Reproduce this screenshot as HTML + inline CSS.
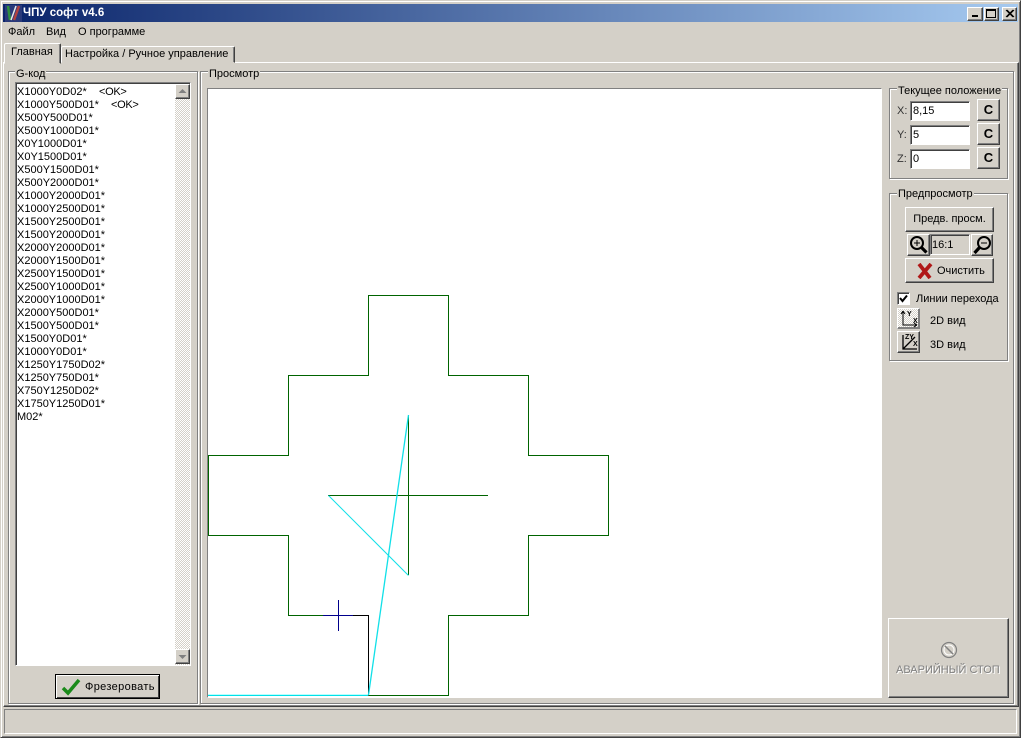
<!DOCTYPE html>
<html><head><meta charset="utf-8"><style>
*{box-sizing:border-box}
html,body{margin:0;padding:0}
body{width:1021px;height:738px;overflow:hidden;position:relative;background:#d4d0c8;font:11px/13px "Liberation Sans",sans-serif;color:#000}
.a{position:absolute}
.t{position:absolute;white-space:pre}
.raised{position:absolute;background:#d4d0c8;border:1px solid;border-color:#fff #404040 #404040 #fff;box-shadow:inset -1px -1px 0 #808080}
.sunk{position:absolute;background:#fff;border:1px solid;border-color:#808080 #fff #fff #808080;box-shadow:inset 1px 1px 0 #404040}
.grp{position:absolute;border:1px solid #808080;box-shadow:1px 1px 0 #fff,inset 1px 1px 0 #fff}
.lab{position:absolute;background:#d4d0c8;padding:0 1px;white-space:pre;line-height:13px}
.c{font-weight:bold;font-size:13px;text-align:center;line-height:19px}
</style></head><body>
<div class="a" style="left:0;top:0;width:1021px;height:738px;border:1px solid;border-color:#d4d0c8 #404040 #404040 #d4d0c8;box-shadow:inset 1px 1px 0 #fff,inset -1px -1px 0 #808080"></div>
<div class="a" style="left:3px;top:4px;width:1015px;height:18px;background:linear-gradient(90deg,#0a246a,#a6caf0)"></div>
<svg class="a" style="left:5px;top:5px" width="17" height="17" viewBox="0 0 17 17"><rect width="17" height="17" fill="#2a3a7a"/><path d="M3 1l2 14" stroke="#2f8f3f" stroke-width="2.500"/><path d="M9 15L14 1" stroke="#b04040" stroke-width="2.500"/><path d="M6 15L11 1" stroke="#e8e8e8" stroke-width="1.500"/></svg>
<div class="t" style="left:23px;top:7px;color:#fff;font-weight:bold;font-size:11.500px">ЧПУ софт v4.6</div>
<div class="raised" style="left:967px;top:7px;width:16px;height:14px"></div><div class="a" style="left:972px;top:15px;width:6px;height:2px;background:#000"></div>
<div class="raised" style="left:984px;top:7px;width:15px;height:14px"></div><div class="a" style="left:986px;top:9px;width:10px;height:9px;border:1px solid #000;border-top-width:2px"></div>
<div class="raised" style="left:1002px;top:7px;width:15px;height:14px"></div>
<svg class="a" style="left:1002px;top:7px" width="15" height="14"><path d="M4 3l7 7M5 3l7 7M11 3l-7 7M12 3l-7 7" stroke="#000"/></svg>
<div class="t" style="left:8px;top:26px">Файл</div><div class="t" style="left:46px;top:26px">Вид</div><div class="t" style="left:78px;top:26px">О программе</div>
<div class="a" style="left:3px;top:62px;width:1016px;height:645px;border:1px solid;border-color:#fff #404040 #404040 #fff;box-shadow:inset -1px -1px 0 #808080"></div>
<div class="a" style="left:61px;top:46px;width:174px;height:17px;background:#d4d0c8;border:1px solid;border-color:#fff #404040 #d4d0c8 #fff;border-radius:2px 2px 0 0;box-shadow:inset -1px 0 0 #808080"></div>
<div class="t" style="left:65px;top:48px">Настройка / Ручное управление</div>
<div class="a" style="left:4px;top:43px;width:57px;height:21px;background:#d4d0c8;border:1px solid;border-color:#fff #404040 #d4d0c8 #fff;border-radius:2px 2px 0 0;box-shadow:inset -1px 0 0 #808080"></div>
<div class="t" style="left:11px;top:46px">Главная</div>

<div class="grp" style="left:8px;top:71px;width:190px;height:633px"></div><div class="lab" style="left:15px;top:68px">G-код</div>
<div class="sunk" style="left:15px;top:82px;width:176px;height:584px"></div>
<div class="a" style="left:175px;top:84px;width:15px;height:581px;background:repeating-conic-gradient(#fff 0 25%,#d4d0c8 0 50%) 0 0/2px 2px"></div>
<div class="raised" style="left:175px;top:84px;width:15px;height:15px"></div><svg class="a" style="left:175px;top:84px" width="15" height="15"><path d="M7.500 5l-4 4h8z" fill="#808080"/></svg>
<div class="raised" style="left:175px;top:649px;width:15px;height:15px"></div><svg class="a" style="left:175px;top:649px" width="15" height="15"><path d="M7.500 10l-4-4h8z" fill="#808080"/></svg>
<div class="t" style="left:17px;top:86px">X1000Y0D02*
X1000Y500D01*
X500Y500D01*
X500Y1000D01*
X0Y1000D01*
X0Y1500D01*
X500Y1500D01*
X500Y2000D01*
X1000Y2000D01*
X1000Y2500D01*
X1500Y2500D01*
X1500Y2000D01*
X2000Y2000D01*
X2000Y1500D01*
X2500Y1500D01*
X2500Y1000D01*
X2000Y1000D01*
X2000Y500D01*
X1500Y500D01*
X1500Y0D01*
X1000Y0D01*
X1250Y1750D02*
X1250Y750D01*
X750Y1250D02*
X1750Y1250D01*
M02*</div>
<div class="t" style="left:99px;top:86px;letter-spacing:-.3px">&lt;OK&gt;</div>
<div class="t" style="left:111px;top:99px;letter-spacing:-.3px">&lt;OK&gt;</div>
<div class="a" style="left:55px;top:674px;width:105px;height:25px;border:1px solid #000;background:#d4d0c8;box-shadow:inset 1px 1px 0 #fff,inset -1px -1px 0 #404040"></div>
<svg class="a" style="left:61px;top:677px" width="20" height="19"><path d="M2 11l5 5L18 3" fill="none" stroke="#1a8a1a" stroke-width="3.500"/></svg>
<div class="t" style="left:85px;top:681px;letter-spacing:.35px">Фрезеровать</div>

<div class="grp" style="left:200px;top:71px;width:814px;height:633px"></div><div class="lab" style="left:208px;top:68px">Просмотр</div>
<div class="sunk" style="left:207px;top:88px;width:675px;height:610px;box-shadow:none"></div>
<svg class="a" style="left:0;top:0" width="1021" height="738" shape-rendering="crispEdges">
<path d="M208 694.500H368" fill="none" stroke="#b8ffff"/>
<g fill="none" stroke="#006400"><path d="M368.500 695.500H448.500V615.500H528.500V535.500H608.500V455.500H528.500V375.500H448.500V295.500H368.500V375.500H288.500V455.500H208.500V535.500H288.500V615.500H323"/>
<path d="M328 495.500H488M408.500 415V575"/></g>
<path d="M323 615.500H368.500V695.500" fill="none" stroke="#000"/>
<path d="M208 695.500H368" fill="none" stroke="#00e0e8"/>
<g shape-rendering="auto" fill="none" stroke="#10e0e8"><path d="M368.500 695L408.500 415" stroke-width="1.300"/><path d="M328.500 495.500L408.500 575.500"/></g>
<path d="M338.500 600V631M323 615.500H353" fill="none" stroke="#00008b"/>
</svg>

<div class="grp" style="left:889px;top:88px;width:119px;height:91px"></div><div class="lab" style="left:897px;top:85px">Текущее положение</div>
<div class="t" style="left:897px;top:105px;color:#333">X:</div><div class="t" style="left:897px;top:129px;color:#333">Y:</div><div class="t" style="left:897px;top:153px;color:#333">Z:</div>
<div class="sunk" style="left:910px;top:101px;width:60px;height:20px"></div><div class="t" style="left:913px;top:105px">8,15</div>
<div class="sunk" style="left:910px;top:125px;width:60px;height:20px"></div><div class="t" style="left:913px;top:129px">5</div>
<div class="sunk" style="left:910px;top:149px;width:60px;height:20px"></div><div class="t" style="left:913px;top:153px">0</div>
<div class="raised c" style="left:977px;top:99px;width:23px;height:22px">C</div>
<div class="raised c" style="left:977px;top:123px;width:23px;height:22px">C</div>
<div class="raised c" style="left:977px;top:147px;width:23px;height:22px">C</div>

<div class="grp" style="left:889px;top:193px;width:119px;height:168px"></div><div class="lab" style="left:897px;top:188px">Предпросмотр</div>
<div class="raised" style="left:905px;top:207px;width:89px;height:25px;text-align:center;line-height:22px">Предв. просм.</div>
<div class="raised" style="left:907px;top:234px;width:23px;height:22px"></div>
<svg class="a" style="left:907px;top:234px" width="23" height="22"><circle cx="10" cy="9" r="6" fill="none" stroke="#000" stroke-width="2"/><path d="M7 9h6M10 6v6" stroke="#000"/><path d="M14.500 13.500l5 5" stroke="#000" stroke-width="3.200"/></svg>
<div class="sunk" style="left:930px;top:234px;width:40px;height:21px;background:#d4d0c8"></div><div class="t" style="left:932px;top:239px">16:1</div>
<div class="raised" style="left:971px;top:234px;width:22px;height:22px"></div>
<svg class="a" style="left:971px;top:234px" width="22" height="22"><circle cx="13" cy="9" r="6" fill="none" stroke="#000" stroke-width="2"/><path d="M10 9h6" stroke="#000"/><path d="M8.500 13.500l-5 5.500" stroke="#000" stroke-width="3.200"/></svg>
<div class="raised" style="left:905px;top:258px;width:89px;height:25px"></div>
<svg class="a" style="left:917px;top:263px" width="16" height="16"><path d="M2 1l11 14M14 1L2 15" stroke="#b01818" stroke-width="3.800"/></svg>
<div class="t" style="left:937px;top:265px">Очистить</div>
<div class="sunk" style="left:897px;top:292px;width:13px;height:13px"></div>
<svg class="a" style="left:897px;top:292px" width="13" height="13"><path d="M3 6l2.500 3L10 3.500" fill="none" stroke="#000" stroke-width="2"/></svg>
<div class="t" style="left:916px;top:293px">Линии перехода</div>
<div class="raised" style="left:897px;top:308px;width:23px;height:21px;border-color:#fff #808080 #808080 #fff;background:repeating-conic-gradient(#fff 0 25%,#d4d0c8 0 50%) 0 0/2px 2px"></div>
<svg class="a" style="left:897px;top:308px" width="23" height="21"><path d="M6 3v14h14M6 3L4 6M6 3l2 3M20 17l-3-2M20 17l-3 2" fill="none" stroke="#000"/><text x="10" y="8" font-size="7" font-family="Liberation Sans" font-weight="bold">Y</text><text x="16" y="15" font-size="7" font-family="Liberation Sans" font-weight="bold">X</text></svg>
<div class="t" style="left:930px;top:315px">2D вид</div>
<div class="raised" style="left:897px;top:331px;width:23px;height:22px"></div>
<svg class="a" style="left:897px;top:331px" width="23" height="22"><path d="M6 4v14h14M6 18L18 6" fill="none" stroke="#000" stroke-width="1.300"/><text x="8" y="8" font-size="7" font-family="Liberation Sans" font-weight="bold">ZY</text><text x="16" y="15" font-size="7" font-family="Liberation Sans" font-weight="bold">X</text></svg>
<div class="t" style="left:930px;top:339px">3D вид</div>

<div class="raised" style="left:888px;top:618px;width:121px;height:80px"></div>
<svg class="a" style="left:940px;top:641px" width="18" height="18"><circle cx="9" cy="9" r="7.500" fill="none" stroke="#808080" stroke-width="1.200"/><circle cx="9" cy="9" r="5" fill="none" stroke="#fff"/><path d="M5 5l8 8" stroke="#808080" stroke-width="1.500"/></svg>
<div class="t" style="left:896px;top:664px;color:#808080;text-shadow:1px 1px 0 #fff;font-size:11px">АВАРИЙНЫЙ СТОП</div>

<div class="a" style="left:4px;top:709px;width:1013px;height:25px;border:1px solid;border-color:#808080 #fff #fff #808080"></div>
</body></html>
